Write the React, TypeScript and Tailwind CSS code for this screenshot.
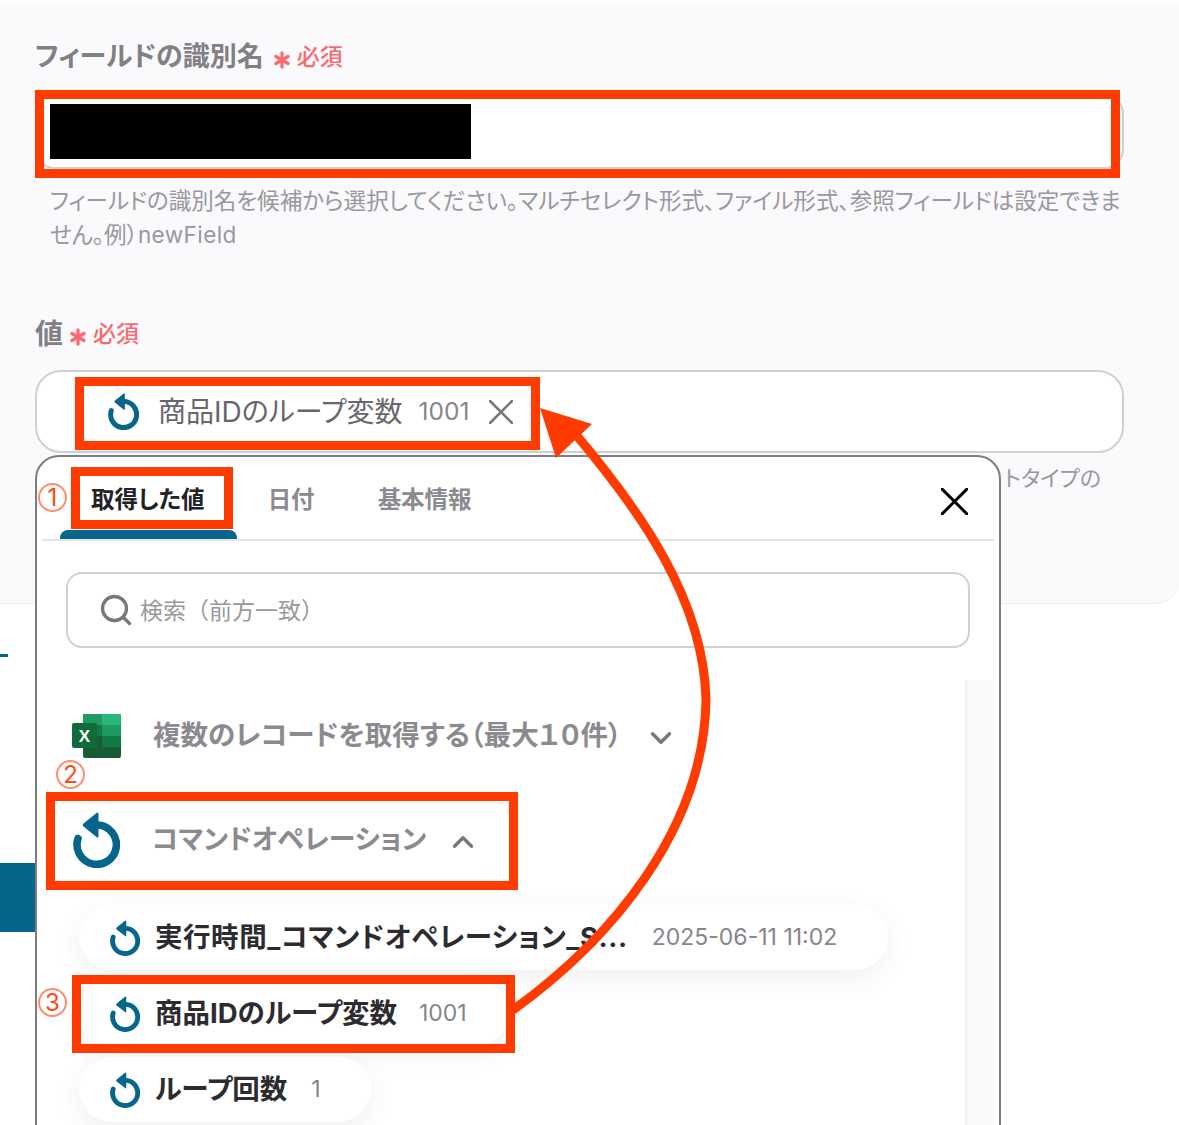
import React from 'react';
import { Asterisk, Search, ChevronDown, ChevronUp } from 'lucide-react';

const LoopIcon = ({ className }: { className: string }) => (
  <svg viewBox="0 0 47 56" className={className} fill="none">
    <path d="M5 26.5 A19.7 19.7 0 1 0 25 13" stroke="#05658a" strokeWidth="7.6" strokeLinecap="round" />
    <path d="M25.5 2 L25.5 24 Q25.5 26.5 23.5 25 L10.5 14.5 Q9 13 10.5 11.5 L23.5 1 Q25.5 -0.5 25.5 2 Z" fill="#05658a" />
  </svg>
);

const CrossIcon = ({ className, stroke }: { className: string; stroke: string }) => (
  <svg viewBox="0 0 24 24" className={className} fill="none">
    <path d="M1 1 L23 23 M23 1 L1 23" stroke={stroke} strokeWidth="2.6" strokeLinecap="round" />
  </svg>
);

const ExcelIcon = () => (
  <svg viewBox="0 0 50 46" className="w-[50px] h-[46px]">
    <rect x="11" y="1" width="38" height="44" rx="2" fill="#185c37" />
    <rect x="11" y="1" width="19" height="11" fill="#1f9b62" />
    <rect x="30" y="1" width="19" height="11" rx="1" fill="#2bb67c" />
    <rect x="11" y="12" width="19" height="11" fill="#107c41" />
    <rect x="30" y="12" width="19" height="11" fill="#1f9b62" />
    <rect x="11" y="23" width="19" height="11" fill="#185c37" />
    <rect x="30" y="23" width="19" height="11" fill="#107c41" />
    <rect x="0" y="10" width="25" height="25" rx="2" fill="#0f6b3a" />
    <text x="12.5" y="28.5" textAnchor="middle" fontSize="17" fontWeight="700" fill="#ffffff" fontFamily="Liberation Sans, sans-serif">X</text>
  </svg>
);

const RedBox = ({ className }: { className: string }) => (
  <div className={`absolute border-[9px] border-[#ff3b00] ${className}`} />
);

const Circled = ({ className, children }: { className: string; children: React.ReactNode }) => (
  <span className={`absolute w-[29px] h-[29px] rounded-full border-2 border-[#ff8f6b] bg-white flex items-center justify-center text-[24px] leading-none text-[#ff4a14] ${className}`}>
    {children}
  </span>
);

const Required = () => (
  <span className="flex items-center h-[34px] text-[#f96a6f] text-[23px] leading-[34px] font-medium">
    <Asterisk className="w-[28px] h-[28px] mt-[6px] mr-[1px] -ml-[5px]" strokeWidth={2.8} />
    必須
  </span>
);

const VarPill = ({ label, value, width, valueClass, labelClass = '' }: { label: string; value: string; width: string; valueClass: string; labelClass?: string }) => (
  <div className={`flex items-center h-[65px] ${width} rounded-full bg-white shadow-[0_8px_24px_rgba(60,60,90,0.08)] pl-[31px]`}>
    <LoopIcon className="w-[30px] h-[36px] shrink-0" />
    <span className={`ml-[15px] text-[27.5px] font-bold text-[#2c2c30] whitespace-nowrap ${labelClass}`}>{label}</span>
    <span className={`text-[23px] text-[#85858a] whitespace-nowrap ${valueClass}`}>{value}</span>
  </div>
);

export default function App() {
  return (
    <div className="relative w-[1179px] h-[1125px] overflow-hidden bg-white font-['Inter','Noto_Sans_CJK_JP',sans-serif] [font-feature-settings:'palt']">
      {/* form panel */}
      <div className="mt-[3px] h-[601px] bg-[#faf9fc] border-b border-[#ececf0] rounded-br-[24px] pt-[37px] pl-[35px] pr-[55px]">
        <div className="flex items-center h-[34px] gap-[9px]">
          <span className="text-[27px] leading-[34px] font-bold text-[#808085]">フィールドの識別名</span>
          <Required />
        </div>
        <div className="mt-[20px] h-[75px] bg-white border-2 border-[#d0d0d4] rounded-[20px] pl-[13px] flex items-center">
          <div className="w-[421px] h-[55px] bg-black" />
        </div>
        <p className="mt-[15px] pl-[15px] text-[22.55px] leading-[34px] text-[#98989d] whitespace-nowrap">
          フィールドの識別名を候補から選択してください。マルチセレクト形式、ファイル形式、参照フィールドは設定できま
          <br />
          せん。例）<span className="tracking-[0.4px]">newField</span>
        </p>
        <div className="mt-[65px] flex items-center h-[34px] gap-[6px]">
          <span className="text-[28px] leading-[34px] font-bold text-[#808085]">値</span>
          <Required />
        </div>
        <div className="mt-[19px] h-[83px] bg-white border-2 border-[#d0d0d4] rounded-[26px] flex items-center pl-[71px]">
          <LoopIcon className="w-[31px] h-[37px] shrink-0" />
          <span className="ml-[19px] text-[28px] text-[#66666b] whitespace-nowrap">商品IDのループ変数</span>
          <span className="ml-[16px] text-[24.5px] text-[#85858a]">1001</span>
          <CrossIcon className="ml-[20px] w-[24px] h-[24px]" stroke="#77777c" />
        </div>
        <div className="mt-[8px] flex justify-end pr-[23px] text-[22px] leading-[34px] text-[#98989d]">トタイプの</div>
      </div>

      {/* page content behind the popup */}
      <div className="mt-[50px] w-[8px] h-[3px] bg-[#05658a]" />
      <div className="mt-[206px] w-[60px] h-[69px] bg-[#05658a] rounded-r-[14px]" />

      {/* variable picker popup */}
      <div className="absolute left-[35px] top-[455px] w-[966px] h-[700px] bg-white border-2 border-[#7d7d80] rounded-t-[24px] px-[5px]">
        <div className="relative flex items-center h-[84px] pt-[4px] border-b-2 border-[#e6e6ea] text-[23.5px] font-bold text-[#8a8a8f]">
          <span className="ml-[49px] text-[#222226]">取得した値</span>
          <span className="ml-[63px]">日付</span>
          <span className="ml-[63px]">基本情報</span>
          <div className="absolute left-[18px] bottom-0 w-[177px] h-[9px] bg-[#05658a] rounded-t-[8px]" />
          <CrossIcon className="absolute right-[26px] top-[31px] w-[27px] h-[27px]" stroke="#000000" />
        </div>
        <div className="mt-[31px] mx-[24px] h-[76px] border-2 border-[#d0d0d4] rounded-[16px] flex items-center pl-[30px]">
          <Search className="w-[36px] h-[36px] text-[#77777c]" strokeWidth={2.2} />
          <span className="ml-[6px] mt-[2px] text-[23px] text-[#98989d] [font-feature-settings:normal]">検索（前方一致）</span>
        </div>
        <div className="relative mt-[32px] h-[445px] pr-[28px]">
          <div className="absolute right-[1px] top-0 w-[28px] h-full bg-[#faf9fc] border-l-2 border-[#f0f0f3]" />
          <div className="flex items-center pt-[33px] pl-[30px]">
            <ExcelIcon />
            <span className="ml-[31px] text-[27.5px] font-bold text-[#8a8a8f] whitespace-nowrap">複数のレコードを取得する（最大１０件）</span>
            <ChevronDown className="ml-[22px] mt-[4px] w-[34px] h-[34px] text-[#77777c]" strokeWidth={2.4} />
          </div>
          <div className="flex items-center mt-[53px] pl-[31px]">
            <LoopIcon className="w-[47px] h-[56px]" />
            <span className="ml-[32px] mt-[1px] text-[27px] font-bold text-[#8a8a8f] whitespace-nowrap">コマンドオペレーション</span>
            <ChevronUp className="ml-[20px] mt-[4px] w-[34px] h-[34px] text-[#77777c]" strokeWidth={2.4} />
          </div>
          <div className="flex flex-col gap-[11px] mt-[37px] pl-[37px]">
            <VarPill label="実行時間_コマンドオペレーション_S..." value="2025-06-11 11:02" width="w-[809px]" valueClass="ml-[24px]" labelClass="tracking-[0.55px]" />
            <VarPill label="商品IDのループ変数" value="1001" width="w-[430px]" valueClass="ml-[22px]" />
            <VarPill label="ループ回数" value="1" width="w-[292px]" valueClass="ml-[24px]" />
          </div>
        </div>
      </div>

      {/* annotations */}
      <RedBox className="left-[35px] top-[90px] w-[1085px] h-[88px]" />
      <RedBox className="left-[75px] top-[377px] w-[465px] h-[73px]" />
      <RedBox className="left-[71px] top-[467px] w-[162px] h-[62px]" />
      <RedBox className="left-[46px] top-[792px] w-[472px] h-[98px]" />
      <RedBox className="left-[72px] top-[975px] w-[443px] h-[78px]" />
      <Circled className="left-[38px] top-[483px]">1</Circled>
      <Circled className="left-[56px] top-[760px]">2</Circled>
      <Circled className="left-[38px] top-[988px]">3</Circled>
      <svg viewBox="0 0 1179 1125" className="absolute left-0 top-0 w-[1179px] h-[1125px] pointer-events-none" fill="none">
        <path d="M513 1010 C610 940 704 830 706 700 C704 600 640 510 572 430" stroke="#ff3b00" strokeWidth="9" />
        <path d="M540 408 L592 424 L556 458 Z" fill="#ff3b00" />
      </svg>
    </div>
  );
}
